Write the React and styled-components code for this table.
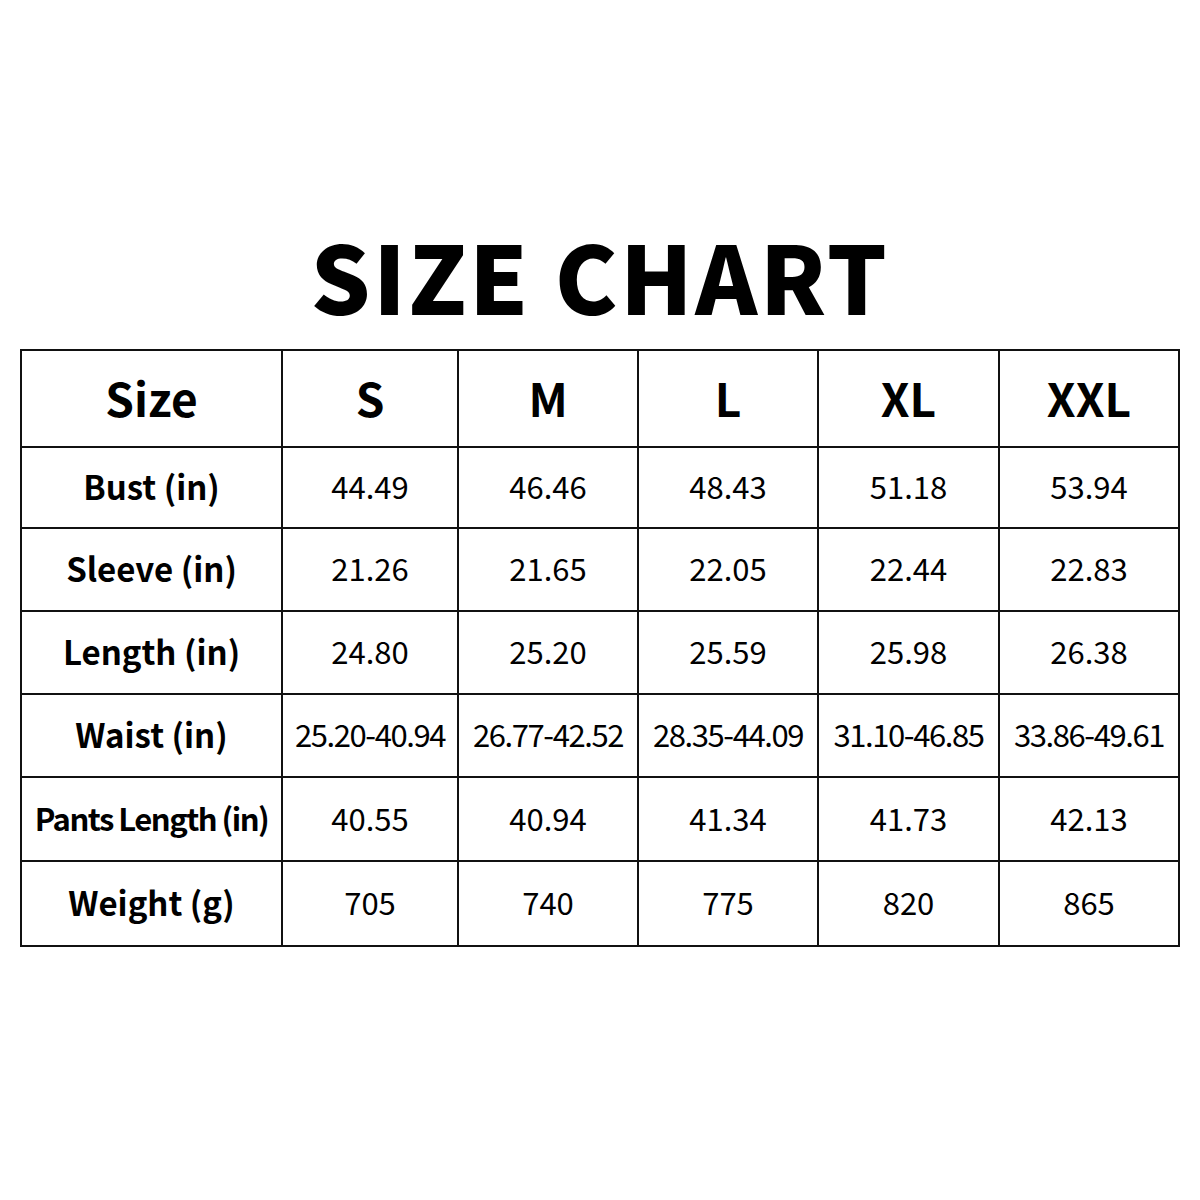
import React from "react";
import styled, { createGlobalStyle } from "styled-components";

const Global = createGlobalStyle`
  html, body {
    margin: 0;
    padding: 0;
    background: #fff;
  }
  body {
    font-family: "Noto Sans CJK SC", "Noto Sans", sans-serif;
    color: #000;
  }
`;

const Page = styled.div`
  width: 1200px;
  height: 1200px;
  display: flex;
  flex-direction: column;
  align-items: center;
  padding-top: 220px;
  box-sizing: border-box;
  background: #fff;
`;

const Title = styled.h1`
  margin: 0 0 21px;
  font-size: 94px;
  font-weight: 900;
  line-height: 108px;
  letter-spacing: 2.5px;
`;

const Table = styled.table`
  width: 1160px;
  border-collapse: collapse;
  table-layout: fixed;
  border: 2px solid #111;
`;

const Cell = styled.td`
  border: 2px solid #111;
  text-align: center;
  padding: 0 0 4px;
  height: ${(p) => p.$h - 4}px;
  font-size: ${(p) => (p.$head ? 46 : p.$tight ? 31 : p.$label ? 33 : 31)}px;
  font-weight: ${(p) => (p.$head || p.$label ? 700 : 400)};
  letter-spacing: ${(p) => (p.$tight ? "-1.5px" : p.$range ? "-1.4px" : "0")};
  white-space: nowrap;
`;

const sizes = ["S", "M", "L", "XL", "XXL"];
const rows = [
  { label: "Bust (in)", vals: ["44.49", "46.46", "48.43", "51.18", "53.94"], h: 79 },
  { label: "Sleeve (in)", vals: ["21.26", "21.65", "22.05", "22.44", "22.83"], h: 81 },
  { label: "Length (in)", vals: ["24.80", "25.20", "25.59", "25.98", "26.38"], h: 81 },
  { label: "Waist (in)", vals: ["25.20-40.94", "26.77-42.52", "28.35-44.09", "31.10-46.85", "33.86-49.61"], h: 81, range: true },
  { label: "Pants Length (in)", vals: ["40.55", "40.94", "41.34", "41.73", "42.13"], h: 82, tight: true },
  { label: "Weight (g)", vals: ["705", "740", "775", "820", "865"], h: 83 },
];

const widths = [261, 176, 180, 180, 181, 180];

export default function App() {
  return (
    <Page>
      <Global />
      <Title>SIZE CHART</Title>
      <Table>
        <colgroup>
          {widths.map((w, i) => (
            <col key={i} style={{ width: w }} />
          ))}
        </colgroup>
        <tbody>
          <tr>
            <Cell $head $h={95}>Size</Cell>
            {sizes.map((s) => (
              <Cell key={s} $head $h={95}>{s}</Cell>
            ))}
          </tr>
          {rows.map((r) => (
            <tr key={r.label}>
              <Cell $label $tight={r.tight} $h={r.h}>{r.label}</Cell>
              {r.vals.map((v, i) => (
                <Cell key={i} $range={r.range} $h={r.h}>{v}</Cell>
              ))}
            </tr>
          ))}
        </tbody>
      </Table>
    </Page>
  );
}
